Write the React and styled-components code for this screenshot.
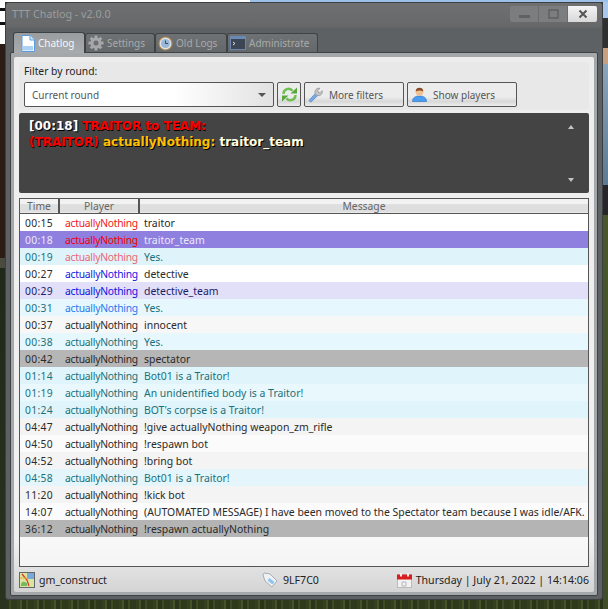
import React from "react";
import styled, { createGlobalStyle } from "styled-components";

const Global = createGlobalStyle`
  html, body { margin: 0; padding: 0; width: 608px; height: 609px; overflow: hidden; }
  body { font-family: "Noto Sans", "DejaVu Sans", sans-serif; font-size: 10.3px; }
  * { box-sizing: border-box; }
`;

const Desktop = styled.div`
  width: 608px; height: 609px; padding: 2px 5px 9px 5px; overflow: hidden;
  background:
    linear-gradient(90deg, #fff 0, #fff 250px, #9dc0e8 250px, #9dc0e8 100%) top/100% 2px no-repeat,
    linear-gradient(180deg, #fff 0, #fff 8px, #111 8px, #111 11px, #fff 11px, #fff 22px, #111 22px, #111 25px, #fff 25px, #fff 44px, #2c1c16 44px, #2c1c16 258px, #4a4a40 258px, #4a4a40 268px, #20281a 268px, #2a3320 100%) left top/5px 100% no-repeat,
    linear-gradient(180deg, #a9c8ee 0, #a9c8ee 18px, #303030 18px, #303030 48px, #c8a080 48px, #c8a080 64px, #8aa4bc 64px, #5c7a94 185px, #26262a 185px, #26262a 215px, #48582c 215px, #3f4e28 100%) right top/5px 100% no-repeat,
    repeating-linear-gradient(90deg, #344020 0 3px, #465228 3px 5px, #2a351b 5px 9px, #3e4a24 9px 11px, #2f3a1d 11px 17px);
`;
const Window = styled.div`
  width: 598px; height: 598px; border: 1px solid #3c3e3f; border-radius: 3px;
  background: linear-gradient(180deg, #6e7071 0, #666869 23px, #5d6163 26px, #5d6163 100%);
  display: flex; flex-direction: column; padding: 0 4px 3px 4px;
`;
const TitleBar = styled.div`
  height: 24px; flex: none; display: flex; align-items: flex-start; justify-content: space-between;
  padding: 3px 1px 0 2px;
`;
const Title = styled.span`
  color: #9b9e9f; font-size: 10.7px; line-height: 17px;
`;
const WinButtons = styled.div`display: flex; height: 16px;`;
const WinButton = styled.div`
  height: 16px; width: ${p => p.$w}px; display: flex; align-items: center; justify-content: center;
  background: ${p => p.$close ? "linear-gradient(180deg,#f4f4f4,#d8d8d8)" : "#7b7d7e"};
  border-right: ${p => p.$close ? "none" : "1px solid #6a6c6d"};
  border-radius: ${p => p.$close ? "0 2px 2px 0" : p.$first ? "2px 0 0 2px" : "0"};
`;
const Tabs = styled.div`
  height: 20px; flex: none; margin-top: 5px; padding-left: 3px; display: flex; align-items: flex-end; position: relative; z-index: 1;
`;
const Tab = styled.div`
  width: ${p => p.$w}px; height: ${p => p.$active ? 21 : 19}px; display: flex; align-items: center; gap: 3px;
  padding-left: ${p => p.$active ? 7 : 2}px; border: 1px solid #3f4244; border-bottom: none; border-radius: 3px 3px 0 0;
  background: ${p => p.$active ? "linear-gradient(180deg,#9a9da0,#a8abad)" : "linear-gradient(180deg,#6f7274,#65686a)"};
  color: ${p => p.$active ? "#f6f6f6" : "#a7aaab"}; font-size: 10px;
  margin-bottom: ${p => p.$active ? -1 : 0}px;
`;
const Panel = styled.div`
  flex: 1; min-height: 0; border: 1px solid #3f4244; border-radius: 2px; background: #a5a8aa;
  padding: 4px 3px 3px 3px; display: flex;
`;
const Inner = styled.div`
  flex: 1; background: linear-gradient(180deg, #ededed 0, #f1f1f1 90%, #d4d4d4 100%); border-radius: 2px;
  padding: 5px 5px 0 5px; display: flex; flex-direction: column; min-width: 0;
`;
const FilterGroup = styled.div`
  background: #e8e8e8; border-radius: 3px; height: 48px; flex: none; padding: 2px 5px 0 5px;
`;
const FilterLabel = styled.div`color: #222; line-height: 15px; margin-bottom: 3px;`;
const Controls = styled.div`display: flex; gap: 3px; height: 25px; font-size: 10px;`;
const Combo = styled.div`
  width: 250px; height: 25px; border: 1px solid #555; border-radius: 2px;
  background: linear-gradient(90deg, #fff 0, #fff 60%, #e2e2e2 100%);
  color: #555; display: flex; align-items: center; justify-content: space-between; padding: 0 7px;
`;
const Arrow = styled.span`
  width: 0; height: 0; border-left: 4px solid transparent; border-right: 4px solid transparent;
  border-top: 4px solid #555;
`;
const Btn = styled.div`
  width: ${p => p.$w}px; height: 25px; border: 1px solid #555; border-radius: 2px;
  background: linear-gradient(180deg, #ececec 0, #ececec 60%, #d8d8d8 80%, #ececec 100%);
  color: #555; display: flex; align-items: center; justify-content: ${p => p.$center ? "center" : "flex-start"};
  gap: 5px; padding-left: ${p => p.$center ? 0 : 3}px;
`;
const MessageBox = styled.div`
  margin-top: 3px; height: 80px; flex: none; background: #444; border-radius: 2px; padding: 5px 10px;
  display: flex; justify-content: space-between;
  font-family: "DejaVu Sans", sans-serif; font-size: 12px; font-weight: 700; line-height: 16px; text-shadow: 1px 1px 0 #000; color: #fff;
`;
const MsgLine = styled.div`white-space: nowrap;`;
const Red = styled.span`color: #f00;`;
const Gold = styled.span`color: #ffc000;`;
const Cream = styled.span`color: #ffffe0;`;
const Scroller = styled.div`
  display: flex; flex-direction: column; justify-content: space-between; align-items: center;
  width: 10px; padding: 7px 0 6px; margin-right: 3px;
`;
const Tri = styled.span`
  width: 0; height: 0; border-left: 3.5px solid transparent; border-right: 3.5px solid transparent;
  ${p => p.$up ? "border-bottom: 4px solid #c4c4c4;" : "border-top: 4px solid #c4c4c4;"}
`;
const Table = styled.div`
  margin-top: 5px; height: 369px; flex: none; border: 1px solid #555; background: linear-gradient(180deg,#fff 0,#fff 80%,#f4f4f4 100%);
  display: flex; flex-direction: column; overflow: hidden;
`;
const Head = styled.div`
  height: 15px; flex: none; display: grid; grid-template-columns: 40px 80px 1fr; border-bottom: 1px solid #555;
`;
const HeadCell = styled.div`
  background: linear-gradient(180deg,#f2f2f2 0,#f2f2f2 35%,#dedede 40%,#dedede 90%,#f0f0f0 100%);
  border-right: ${p => p.$last ? "none" : "2px solid #555"}; color: #666; text-align: center; line-height: 14px; font-size: 10.3px;
`;
const Row = styled.div`
  height: 17px; flex: none; display: grid; grid-template-columns: 40px 79px 1fr; padding: 1px 0 0 5px; line-height: 16px;
  background: ${p => p.$bg}; color: ${p => p.$fg}; white-space: nowrap;
`;
const TimeCell = styled.span`letter-spacing: .35px;`;
const PlayerCell = styled.span`color: ${p => p.$c}; letter-spacing: -.25px;`;
const MessageCell = styled.span`overflow: hidden; font-size: 10.45px;`;
const Status = styled.div`
  height: 20px; margin-top: 3px; display: flex; align-items: center; color: #222; flex: none; font-size: 10.6px;
`;
const StatusItem = styled.div`
  display: flex; align-items: center; gap: ${p => p.$gap || 4}px; width: ${p => p.$w ? p.$w + "px" : "auto"}; margin-left: ${p => p.$auto ? "auto" : 0};
`;

const DocIcon = () => (
  <svg width="14" height="17" viewBox="0 0 14 17"><path d="M1 .5h8l4.500 4.500v11.500h-12.500z" fill="#fff" stroke="#5b9bdc"/><path d="M2 11h10v4.500h-10z" fill="#a9d2f5"/><path d="M9 .5v4.500h4.500" fill="#d6e9fa" stroke="#5b9bdc"/></svg>
);
const GearIcon = () => (
  <svg width="16" height="16" viewBox="0 0 16 16"><g fill="#a5a7a8"><circle cx="8" cy="8" r="5.500"/>{[0,45,90,135].map(a => <rect key={a} x="6.500" y="0.500" width="3" height="15" transform={`rotate(${a} 8 8)`}/>)}</g><circle cx="8" cy="8" r="2.500" fill="#6c6f71"/></svg>
);
const ClockIcon = () => (
  <svg width="15" height="15" viewBox="0 0 15 15"><circle cx="7.500" cy="7.500" r="6.500" fill="#dfe4ea" stroke="#b08a50" strokeWidth="1.200"/><circle cx="7.500" cy="7.500" r="4.500" fill="#9bb7d8"/><path d="M7.500 4.500v3h2.500" stroke="#2c4a78" fill="none"/></svg>
);
const TermIcon = () => (
  <svg width="16" height="14" viewBox="0 0 16 14"><rect x=".5" y=".5" width="15" height="13" fill="#3c4654" stroke="#6a86aa"/><rect x="1" y="1" width="14" height="2" fill="#6a88b8"/><path d="M3 6l2 1.500-2 1.500" stroke="#ddd" fill="none"/></svg>
);
const RefreshIcon = () => (
  <svg width="17" height="17" viewBox="0 0 17 17" fill="none">
    <path d="M2.500 8A5 5 0 0 1 11.500 4.800" stroke="#6fbf52" strokeWidth="2.400"/>
    <path d="M9.500 7.500h6.500v-6z" fill="#58a83e"/>
    <path d="M14.500 9A5 5 0 0 1 5.500 12.200" stroke="#6fbf52" strokeWidth="2.400"/>
    <path d="M7.500 9.500h-6.500v6z" fill="#58a83e"/>
  </svg>
);
const WrenchIcon = () => (
  <svg width="16" height="18" viewBox="0 0 18 18"><path d="M1.500 14.500l7-7.500 2.500 2.500-7 7a1.700 1.700 0 0 1-2.500-2z" fill="#7aa8e0" stroke="#4a7cc0" strokeWidth=".7"/><path d="M8 7.500a4.500 4.500 0 0 1 5.500-6l-2.500 2.500 .5 2 2 .5 2.500-2.500a4.500 4.500 0 0 1-6 5.500z" fill="#c4c4c4" stroke="#8a8a8a" strokeWidth=".7"/></svg>
);
const UserIcon = () => (
  <svg width="17" height="17" viewBox="0 0 17 17"><path d="M1.500 15.500c0-4 3-5.500 7-5.500s7 1.500 7 5.500z" fill="#4a9df0" stroke="#2a6fc0" strokeWidth=".6"/><circle cx="8.500" cy="6" r="3.800" fill="#f0c090"/><path d="M4.700 5.500a3.800 3.800 0 0 1 7.600 0c-2-1.500-5.500-1.500-7.600 0z" fill="#8a4a24"/></svg>
);
const MapIcon = () => (
  <svg width="16" height="16" viewBox="0 0 16 16"><rect x=".5" y=".5" width="15" height="15" fill="#d8e4a0" stroke="#666"/><rect x="8" y="1" width="7" height="6" fill="#7aa8d8"/><path d="M2 12a3 3 0 0 1 6 2H2z" fill="#74b860"/><path d="M3 2l5 6 2 6" stroke="#e03020" fill="none" strokeWidth="1.200"/><path d="M1 6h8" stroke="#e8b040"/></svg>
);
const TagIcon = () => (
  <svg width="16" height="16" viewBox="0 0 16 16"><path d="M1 3l1-2 6 1 7 7-5 6-7-6z" fill="#eef2f5" stroke="#a9adb1"/><path d="M7.500 6l5 4-2 2.500-5-4z" fill="#8ec4ee"/></svg>
);
const CalIcon = () => (
  <svg width="15" height="15" viewBox="0 0 15 15"><rect x=".5" y="2" width="14" height="12.500" fill="#f2f2f2" stroke="#bbb"/><rect x="0" y="1.500" width="15" height="5" fill="#d81e1e"/><rect x="3" y="0" width="2" height="3.500" fill="#eee"/><rect x="10" y="0" width="2" height="3.500" fill="#eee"/><path d="M5 9h4v4h-4z" fill="none" stroke="#aaa" strokeWidth=".8"/></svg>
);

const T = "#1c7078";
const D = "#2a2a2a";
const rows = [
  ["00:15","traitor","#fff",D,"#f01818"],
  ["00:18","traitor_team","#8f7fdf","#ece8fa","#f00000"],
  ["00:19","Yes.","#dff4fa",T,"#ee6478"],
  ["00:27","detective","#fff",D,"#1414e6"],
  ["00:29","detective_team","#e2e0f8","#1c1a6c","#1010e0"],
  ["00:31","Yes.","#e6f7fd",T,"#2a78f0"],
  ["00:37","innocent","#f7f7f7",D,D],
  ["00:38","Yes.","#e6f7fd",T,T],
  ["00:42","spectator","#b6b6b6",D,D],
  ["01:14","Bot01 is a Traitor!","#e0f5fb",T,T],
  ["01:19","An unidentified body is a Traitor!","#e8f8fd",T,T],
  ["01:24","BOT's corpse is a Traitor!","#e0f5fb",T,T],
  ["04:47","!give actuallyNothing weapon_zm_rifle","#f4f4f4",D,D],
  ["04:50","!respawn bot","#fbfbfb",D,D],
  ["04:52","!bring bot","#f4f4f4",D,D],
  ["04:58","Bot01 is a Traitor!","#e4f6fc",T,T],
  ["11:20","!kick bot","#f4f4f4",D,D],
  ["14:07","(AUTOMATED MESSAGE) I have been moved to the Spectator team because I was idle/AFK.","#fbfbfb",D,D],
  ["36:12","!respawn actuallyNothing","#b4b4b4",D,D],
];

export default function App() {
  return (
    <Desktop>
      <Global />
      <Window>
        <TitleBar>
          <Title>TTT Chatlog - v2.0.0</Title>
          <WinButtons>
            <WinButton $w={29} $first><svg width="11" height="10" viewBox="0 0 11 10"><rect y="6" width="11" height="3" fill="#5f6162"/></svg></WinButton>
            <WinButton $w={29}><svg width="11" height="10" viewBox="0 0 11 10"><rect x="1" y="1" width="9" height="8" fill="none" stroke="#5f6162" strokeWidth="1.500"/></svg></WinButton>
            <WinButton $w={29} $close><svg width="10" height="10" viewBox="0 0 10 10"><path d="M1.500 1.500l7 7M8.500 1.500l-7 7" stroke="#555" strokeWidth="2"/></svg></WinButton>
          </WinButtons>
        </TitleBar>
        <Tabs>
          <Tab $w={72} $active><DocIcon />Chatlog</Tab>
          <Tab $w={70}><GearIcon />Settings</Tab>
          <Tab $w={72}><ClockIcon />Old Logs</Tab>
          <Tab $w={91}><TermIcon />Administrate</Tab>
        </Tabs>
        <Panel>
          <Inner>
            <FilterGroup>
              <FilterLabel>Filter by round:</FilterLabel>
              <Controls>
                <Combo>Current round<Arrow /></Combo>
                <Btn $w={24} $center><RefreshIcon /></Btn>
                <Btn $w={100}><WrenchIcon />More filters</Btn>
                <Btn $w={110}><UserIcon />Show players</Btn>
              </Controls>
            </FilterGroup>
            <MessageBox>
              <div>
                <MsgLine>[00:18] <Red>TRAITOR to TEAM:</Red></MsgLine>
                <MsgLine><Red>(TRAITOR)</Red> <Gold>actuallyNothing:</Gold> <Cream>traitor_team</Cream></MsgLine>
              </div>
              <Scroller><Tri $up /><Tri /></Scroller>
            </MessageBox>
            <Table>
              <Head>
                <HeadCell>Time</HeadCell>
                <HeadCell>Player</HeadCell>
                <HeadCell $last>Message</HeadCell>
              </Head>
              {rows.map(([t, m, bg, fg, pc]) => (
                <Row key={t} $bg={bg} $fg={fg}>
                  <TimeCell>{t}</TimeCell>
                  <PlayerCell $c={pc}>actuallyNothing</PlayerCell>
                  <MessageCell>{m}</MessageCell>
                </Row>
              ))}
            </Table>
            <Status>
              <StatusItem $w={243}><MapIcon />gm_construct</StatusItem>
              <StatusItem $gap={5}><TagIcon />9LF7C0</StatusItem>
              <StatusItem $auto><CalIcon />Thursday | July 21, 2022 | 14:14:06</StatusItem>
            </Status>
          </Inner>
        </Panel>
      </Window>
    </Desktop>
  );
}
